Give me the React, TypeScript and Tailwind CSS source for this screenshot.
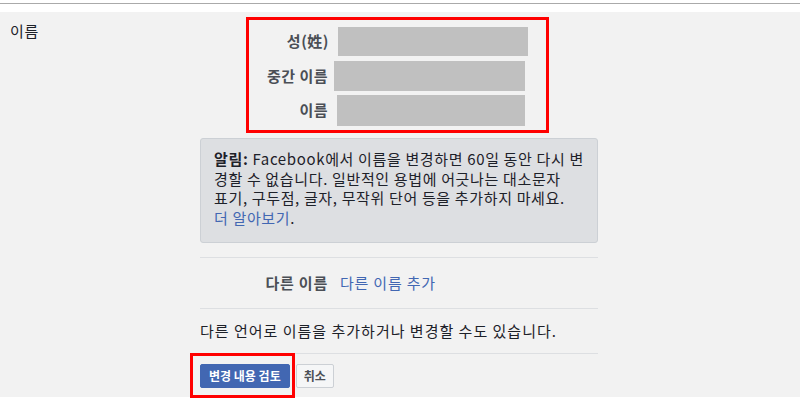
import React from 'react'

const font = { fontFamily: '"Noto Sans CJK KR", "Liberation Sans", sans-serif' }

export default function App() {
  return (
    <div className="w-[800px] h-[400px] bg-white overflow-hidden text-[#1d2129]" style={font}>
      {/* top strip */}
      <div className="h-[12px] bg-white pt-[3px]">
        <div className="h-px bg-[#aaaaaa]" />
      </div>

      <div className="flex bg-[#f2f2f2] h-[385px]">
        <div className="w-[200px] pl-[10px] pt-[9px] text-[15px] tracking-[0.7px] leading-[20px]">이름</div>

        <div className="w-[398px] flex flex-col">
          {/* name fields */}
          <div className="mt-[5px] ml-[46px] w-[303px] h-[116px] border-[3px] border-[#ff0000] pt-[7px] flex flex-col text-[15px] tracking-[0.5px] font-bold text-[#4b4f56]">
            <div className="flex items-center">
              <div className="w-[80px] text-right">성(姓)</div>
              <div className="ml-[9px] w-[190px] h-[29px] bg-[#c0c0c0]" />
            </div>
            <div className="flex items-center mt-[5px]">
              <div className="w-[79px] text-right">중간 이름</div>
              <div className="ml-[6px] w-[191px] h-[30px] bg-[#c0c0c0]" />
            </div>
            <div className="flex items-center mt-[4px]">
              <div className="w-[79px] text-right">이름</div>
              <div className="ml-[9px] w-[188px] h-[31px] bg-[#c0c0c0]" />
            </div>
          </div>

          {/* notice */}
          <div className="mt-[5px] h-[105px] bg-[#dddfe2] border border-[#ccd0d5] rounded-[3px] pl-[13px] pt-[10px] text-[15px] tracking-[0.65px] leading-[19.5px] whitespace-nowrap">
            <div><span className="font-bold">알림:</span> Facebook에서 이름을 변경하면 60일 동안 다시 변</div>
            <div>경할 수 없습니다. 일반적인 용법에 어긋나는 대소문자</div>
            <div>표기, 구두점, 글자, 무작위 단어 등을 추가하지 마세요.</div>
            <div><span className="text-[#4267b2]">더 알아보기</span>.</div>
          </div>

          <div className="mt-[14px] h-px bg-[#dddfe2]" />

          <div className="h-[50px] flex items-center text-[15px] tracking-[0.8px]">
            <div className="w-[128px] text-right font-bold text-[#4b4f56]">다른 이름</div>
            <div className="ml-[12px] text-[#4267b2]">다른 이름 추가</div>
          </div>

          <div className="h-px bg-[#dddfe2]" />

          <div className="h-[44px] flex items-center text-[15px] tracking-[1px] whitespace-nowrap">
            다른 언어로 이름을 추가하거나 변경할 수도 있습니다.
          </div>

          <div className="h-px bg-[#dddfe2]" />

          <div className="relative flex items-start pt-[10px]">
            <button className="h-[24px] px-[8px] bg-[#4267b2] border border-[#4267b2] rounded-[2px] text-white text-[12px] font-bold leading-[22px]">
              변경 내용 검토
            </button>
            <button className="ml-[6px] h-[24px] px-[7px] bg-[#f5f6f7] border border-[#ccd0d5] rounded-[2px] text-[#4b4f56] text-[12px] font-bold leading-[22px]">
              취소
            </button>
            <div className="absolute left-[-10px] top-[-1px] w-[105px] h-[45px] border-[3px] border-[#ff0000] pointer-events-none" />
          </div>
        </div>
      </div>
    </div>
  )
}
